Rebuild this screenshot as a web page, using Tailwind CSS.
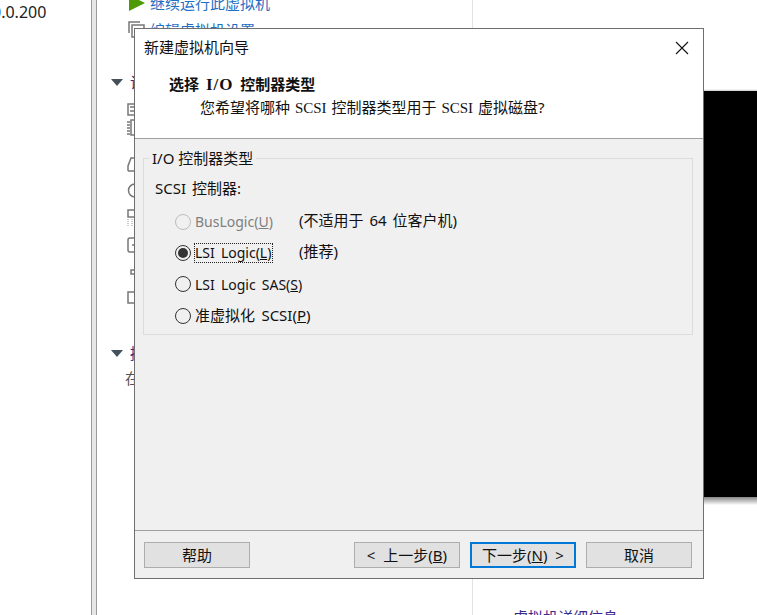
<!DOCTYPE html>
<html lang="zh">
<head>
    <meta charset="UTF-8">
    <title>新建虚拟机向导</title>
    <script src="https://cdn.jsdelivr.net/npm/@tailwindcss/browser@4"></script>
</head>
<body class="w-[757px] h-[615px] overflow-hidden bg-white relative font-['Noto_Sans','Noto_Sans_CJK_SC',sans-serif] text-[15px] text-[#111]">
    <!-- Background window -->
    <div class="flex h-[615px]">
        <div class="w-[91px] shrink-0 text-[16px] leading-5 pt-[2px] text-[#222] overflow-hidden whitespace-nowrap"><span class="block -ml-[8px]">0.0.200</span></div>
        <div class="w-[6px] shrink-0 bg-[#e6e6e6] border-x border-[#9a9a9a]"></div>
        <div class="w-[376px] shrink-0 border-r border-[#e2e2e2]">
            <div class="flex items-center gap-[5px] ml-[32px] -mt-[7px] h-[20px]">
                <svg width="16" height="16" viewBox="0 0 16 16"><path d="M0 0L16 8L0 16Z" fill="#4e9a06"/></svg>
                <span class="text-[#1f6fc4] leading-none">继续运行此虚拟机</span>
            </div>
            <div class="flex items-center gap-[4px] ml-[31px] mt-[7px] h-[20px]">
                <svg width="18" height="18" viewBox="0 0 18 18" fill="none" stroke="#777" stroke-width="1.5"><path d="M1 12V1H12"/><rect x="4" y="4" width="12" height="12"/></svg>
                <span class="text-[#1f6fc4] leading-none">编辑虚拟机设置</span>
            </div>
            <div class="flex items-center gap-[7px] ml-[14px] mt-[33px] h-[18px]">
                <svg width="12" height="7" viewBox="0 0 12 7"><path d="M0 0H12L6 7Z" fill="#44505a"/></svg>
                <span class="text-[#3a2a8c] leading-none">设备</span>
            </div>
            <div class="flex flex-col items-start ml-[30px] mt-[12px] text-[#777]">
                <svg width="16" height="13" viewBox="0 0 16 13" fill="none" stroke="currentColor" stroke-width="1.5"><rect x="1" y="1" width="14" height="11"/><path d="M3 4H14M3 8H14"/></svg>
                <svg class="mt-[2px]" width="16" height="19" viewBox="0 0 16 19" fill="none" stroke="currentColor" stroke-width="1.5"><rect x="4" y="2" width="11" height="15"/><path d="M0 4H3M0 7H3M0 10H3M0 13H3M0 16H3"/></svg>
                <svg class="mt-[20px]" width="16" height="15" viewBox="0 0 16 15" fill="none" stroke="currentColor" stroke-width="1.5"><path d="M1 14V9L4 1H15M1 14H15"/></svg>
                <svg class="mt-[11px]" width="16" height="15" viewBox="0 0 16 15" fill="none" stroke="currentColor" stroke-width="1.5"><circle cx="8" cy="7.5" r="6.5"/></svg>
                <svg class="mt-[11px]" width="16" height="18" viewBox="0 0 16 18" fill="none" stroke="currentColor" stroke-width="1.5"><rect x="1" y="1" width="14" height="7"/><path d="M1 10V18M5 10V18" stroke="#bbb" stroke-dasharray="1 1"/></svg>
                <svg class="mt-[10px]" width="16" height="16" viewBox="0 0 16 16" fill="none" stroke="currentColor" stroke-width="1.5"><rect x="1" y="1" width="14" height="14" rx="2"/><path d="M5 8H12"/></svg>
                <svg class="mt-[16px] ml-[3px]" width="13" height="6" viewBox="0 0 13 6" fill="none" stroke="currentColor" stroke-width="1.5"><rect x="1" y="1" width="12" height="4"/></svg>
                <svg class="mt-[16px]" width="16" height="16" viewBox="0 0 16 16" fill="none" stroke="currentColor" stroke-width="1.5"><rect x="1" y="1" width="14" height="11"/><path d="M9 12V16"/></svg>
            </div>
            <div class="flex items-center gap-[7px] ml-[14px] mt-[37px] h-[18px]">
                <svg width="12" height="7" viewBox="0 0 12 7"><path d="M0 0H12L6 7Z" fill="#44505a"/></svg>
                <span class="text-[#3a2a8c] leading-none">描述</span>
            </div>
            <div class="ml-[28px] mt-[6px] text-[#555] leading-5">在</div>
        </div>
        <div class="flex-1">
            <div class="h-[89px]"></div>
            <div class="h-[2px] bg-gradient-to-b from-white to-[#ccc]"></div>
            <div class="h-[406px] bg-black"></div>
            <div class="h-[8px] bg-gradient-to-b from-[#888] to-white"></div>
            <div class="ml-[40px] mt-[105px] text-[#3a2a8c] leading-none whitespace-nowrap">虚拟机详细信息</div>
        </div>
    </div>

    <!-- Wizard dialog -->
    <div class="absolute left-[134px] top-[28px] w-[570px] h-[551px] border border-[#6f6f6f] bg-[#f0f0f0] flex flex-col">
        <div class="h-[110px] bg-white border-b border-[#a0a0a0] relative shrink-0">
            <div class="pl-[9px] pt-[8px] leading-5">新建虚拟机向导</div>
            <svg class="absolute right-[14px] top-[12px]" width="14" height="14" viewBox="0 0 14 14" fill="none" stroke="#111" stroke-width="1.1"><path d="M1 1L13 13M13 1L1 13"/></svg>
            <div class="pl-[34px] mt-[17px] font-bold leading-5 [word-spacing:3px]">选择 <span class="font-['Liberation_Serif'] text-[17px] tracking-[1px]">I/O</span> 控制器类型</div>
            <div class="pl-[65px] mt-[2px] leading-5 [word-spacing:1px]">您希望将哪种 <span class="font-['Liberation_Serif']">SCSI</span> 控制器类型用于 <span class="font-['Liberation_Serif']">SCSI</span> 虚拟磁盘?</div>
        </div>

        <div class="flex-1 pl-[8px] pr-[10px] pt-[19px]">
            <div class="relative border border-[#dcdcdc] h-[177px] pl-[11px] pt-[19px]">
                <span class="absolute left-[5px] -top-[11px] bg-[#f0f0f0] px-[3px] leading-5">I/O 控制器类型</span>
                <div class="leading-5 [word-spacing:2px]">SCSI 控制器:</div>
                <div class="mt-[8px] flex flex-col [word-spacing:2.5px]">
                    <div class="flex items-center h-[31.3px]">
                        <span class="w-[16px] h-[16px] ml-[20px] rounded-full border border-[#bcbcbc] bg-[#f0f0f0]"></span>
                        <span class="ml-[4px] w-[104px] text-[14px] text-[#7f7f7f]">BusLogic(<u>U</u>)</span>
                        <span class="mb-[3px] [word-spacing:2px]">(不适用于 64 位客户机)</span>
                    </div>
                    <div class="flex items-center h-[31.3px]">
                        <span class="w-[16px] h-[16px] ml-[20px] rounded-full border border-[#333] flex items-center justify-center"><span class="w-[10px] h-[10px] rounded-full bg-[#333]"></span></span>
                        <span class="ml-[4px] w-[104px] text-[14px]"><span class="inline-block -ml-[1px] w-[79px] leading-[18px] border border-dotted border-[#222]">LSI Logic(<u>L</u>)</span></span>
                        <span class="mb-[3px]">(推荐)</span>
                    </div>
                    <div class="flex items-center h-[31.3px]">
                        <span class="w-[16px] h-[16px] ml-[20px] rounded-full border border-[#333]"></span>
                        <span class="ml-[4px] text-[14px]">LSI Logic SAS(<u>S</u>)</span>
                    </div>
                    <div class="flex items-center h-[31.3px]">
                        <span class="w-[16px] h-[16px] ml-[20px] rounded-full border border-[#333]"></span>
                        <span class="ml-[4px]">准虚拟化 SCSI(<u>P</u>)</span>
                    </div>
                </div>
            </div>
        </div>

        <div class="h-[48px] shrink-0 border-t border-[#a0a0a0] flex items-start pt-[11px] pl-[9px] pr-[11px]">
            <button class="w-[106px] h-[26px] bg-[#e1e1e1] border border-[#adadad] leading-none">帮助</button>
            <button class="ml-[104px] w-[106px] h-[26px] bg-[#e1e1e1] border border-[#adadad] leading-none [word-spacing:4px]">&lt; 上一步(<u>B</u>)</button>
            <button class="ml-[10px] w-[106px] h-[26px] bg-[#e1e1e1] border-2 border-[#0078d7] leading-none [word-spacing:4px]">下一步(<u>N</u>) &gt;</button>
            <button class="ml-[10px] w-[106px] h-[26px] bg-[#e1e1e1] border border-[#adadad] leading-none">取消</button>
        </div>
    </div>
</body>
</html>
